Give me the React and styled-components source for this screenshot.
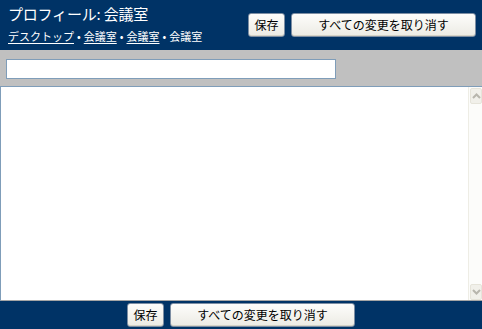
import React from 'react';
import styled, { createGlobalStyle } from 'styled-components';

const GlobalStyle = createGlobalStyle`
  html, body {
    margin: 0;
    padding: 0;
    background: #003366;
  }
  body {
    font-family: "Noto Sans CJK JP", "Liberation Sans", sans-serif;
  }
`;

const Page = styled.div`
  width: 482px;
  height: 329px;
  display: flex;
  flex-direction: column;
  overflow: hidden;
`;

const Header = styled.header`
  height: 50px;
  box-sizing: border-box;
  background: #003366;
  display: flex;
  align-items: center;
  justify-content: space-between;
  padding: 0 6px 0 8px;
`;

const TitleBlock = styled.div`
  display: flex;
  flex-direction: column;
  color: #fff;
  margin-top: -2px;
`;

const Title = styled.h1`
  margin: 0;
  font-size: 15px;
  font-weight: normal;
  line-height: 20px;
  letter-spacing: -0.2px;
`;

const Crumbs = styled.div`
  display: flex;
  align-items: center;
  font-size: 11px;
  line-height: 16px;
  margin-top: 4px;
`;

const Crumb = styled.span`
  color: #fff;
  text-decoration: ${p => (p.$link ? 'underline' : 'none')};
  text-underline-offset: 2px;
`;

const Sep = styled.span`
  margin: 0 3px;
  color: #fff;
`;

const ButtonGroup = styled.div`
  display: flex;
  gap: 6px;
  justify-content: ${p => (p.$center ? 'center' : 'flex-end')};
`;

const Button = styled.button`
  height: 24px;
  width: ${p => p.$w}px;
  box-sizing: border-box;
  padding: 0;
  border: 1px solid #7d8ea3;
  border-radius: 3px;
  background: linear-gradient(#fdfdfb, #ecebe4);
  color: #000;
  font-family: "Noto Sans CJK JP", "Liberation Sans", sans-serif;
  font-size: 12px;
  line-height: 20px;
  cursor: pointer;
  box-shadow: inset 0 -1px 0 #d6d3c6;
`;

const SearchBar = styled.div`
  height: 36px;
  box-sizing: border-box;
  background: #c0c0c0;
  padding: 9px 6px 0 6px;
`;

const SearchInput = styled.input`
  display: block;
  width: 330px;
  height: 20px;
  box-sizing: border-box;
  border: 1px solid #7f9db9;
  background: #fff;
  margin: 0;
  padding: 0 3px;
  outline: none;
`;

const Editor = styled.div`
  flex: 1;
  display: flex;
  background: #fff;
  border-top: 1px solid #7f9db9;
  border-left: 1px solid #7f9db9;
  border-bottom: 1px solid #a5a5a5;
  min-height: 0;
`;

const EditArea = styled.div`
  flex: 1;
  background: #fff;
`;

const ScrollTrack = styled.div`
  width: 13px;
  display: flex;
  flex-direction: column;
  justify-content: space-between;
  background: #fcfcfa;
  border-left: 1px solid #eeede5;
  padding-top: 1px;
`;

const ScrollBtn = styled.div`
  height: 14px;
  margin-left: 1px;
  background: #f1f0ea;
  border: 1px solid #e6e4da;
  border-radius: 2px;
  display: flex;
  align-items: center;
  justify-content: center;
`;

const Footer = styled.footer`
  height: 28px;
  box-sizing: border-box;
  background: #003366;
  padding-top: 2px;
`;

const Chevron = ({ up }) => (
  <svg width="9" height="6" viewBox="0 0 9 6">
    <path
      d={up ? 'M1 5 L4.5 1.5 L8 5' : 'M1 1 L4.5 4.5 L8 1'}
      fill="none"
      stroke="#b8b6ad"
      strokeWidth="2"
    />
  </svg>
);

const Actions = ({ center }) => (
  <ButtonGroup $center={center}>
    <Button $w={37}>保存</Button>
    <Button $w={185}>すべての変更を取り消す</Button>
  </ButtonGroup>
);

const App = () => (
  <>
    <GlobalStyle />
    <Page>
      <Header>
        <TitleBlock>
          <Title>プロフィール: 会議室</Title>
          <Crumbs>
            <Crumb $link>デスクトップ</Crumb>
            <Sep>•</Sep>
            <Crumb $link>会議室</Crumb>
            <Sep>•</Sep>
            <Crumb $link>会議室</Crumb>
            <Sep>•</Sep>
            <Crumb>会議室</Crumb>
          </Crumbs>
        </TitleBlock>
        <Actions />
      </Header>
      <SearchBar>
        <SearchInput type="text" />
      </SearchBar>
      <Editor>
        <EditArea />
        <ScrollTrack>
          <ScrollBtn><Chevron up /></ScrollBtn>
          <ScrollBtn><Chevron /></ScrollBtn>
        </ScrollTrack>
      </Editor>
      <Footer>
        <Actions center />
      </Footer>
    </Page>
  </>
);

export default App;
